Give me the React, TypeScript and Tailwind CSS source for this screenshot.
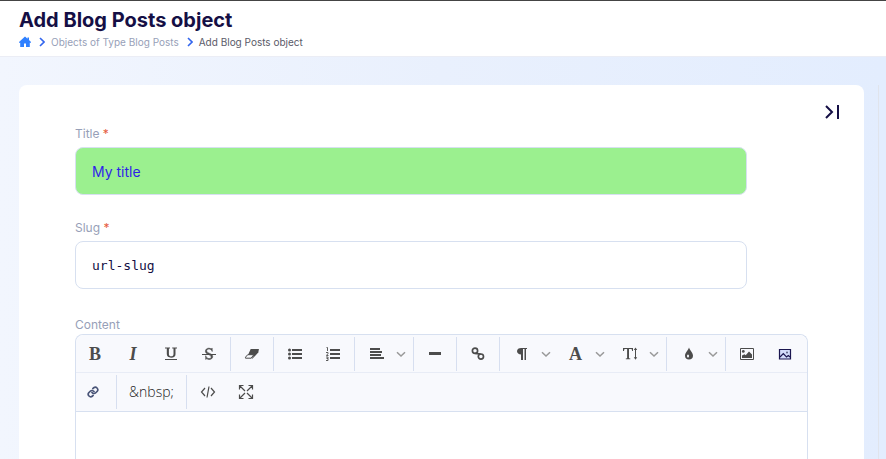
import type { ReactNode } from "react";

function Icon({ children, size = 16, className = "" }: { children: ReactNode; size?: number; className?: string }) {
  return (
    <svg width={size} height={size} viewBox="0 0 16 16" fill="currentColor" aria-hidden="true" className={className}>
      {children}
    </svg>
  );
}

function Chevron() {
  return (
    <svg width="10" height="10" viewBox="0 0 10 10" fill="none" stroke="#999999" strokeWidth="1.5" aria-hidden="true">
      <path d="M1 3.2 5 7l4-3.8" />
    </svg>
  );
}

function Tool({ label, children, wide = false }: { label: string; children: ReactNode; wide?: boolean }) {
  return (
    <button
      type="button"
      aria-label={label}
      className={`flex h-[34px] shrink-0 items-center justify-center text-[#4c4c4c] ${wide ? "w-[65px]" : "w-[38px]"}`}
    >
      {children}
    </button>
  );
}

function MenuTool({ label, children }: { label: string; children: ReactNode }) {
  return (
    <button type="button" aria-label={label} className="flex h-[34px] w-[54px] shrink-0 items-center text-[#4c4c4c]">
      <span className="flex w-[39px] justify-center">{children}</span>
      <Chevron />
    </button>
  );
}

function Group({ children, first = false, last = false }: { children: ReactNode; first?: boolean; last?: boolean }) {
  return (
    <div className={`flex pr-0.5 ${first ? "" : "pl-0.5"} ${last ? "" : "border-r border-[#d7dff0]"}`}>{children}</div>
  );
}

const letter = "font-['Liberation_Serif',serif] text-[18px] leading-none font-bold";

function Toolbar() {
  return (
    <div role="toolbar" aria-label="Content formatting" className="rounded-t-lg border-b border-[#d7e0f0] bg-[#f8f9fd]">
      <div className="flex border-b border-[#e8ecf6] pt-0.5 pb-px">
        <Group first>
          <Tool label="Bold"><span className={letter}>B</span></Tool>
          <Tool label="Italic"><span className={`${letter} italic`}>I</span></Tool>
          <Tool label="Underline">
            <Icon>
              <path d="M2 1.500h5v1H5.900V8c0 1.600.8 2.300 2.300 2.300s2.300-.8 2.300-2.300V2.500H9.200v-1H14v1h-1.500v5.700c0 2.100-1.500 3.500-4.400 3.500-2.700 0-4.300-1.300-4.300-3.600V2.500H2zM2 13h12v1H2z" />
            </Icon>
          </Tool>
          <Tool label="Strikethrough">
            <Icon>
              <path d="M1 8h14v1H1z" />
              <path d="M11.200 5.500C10.700 3.800 9.700 2.900 8 2.900c-1.400 0-2.300.7-2.300 1.800 0 3 6 2.300 6 5.800 0 1.900-1.500 3-3.700 3-1.200 0-2.200-.7-2.800-.7l-.5.6V9.700c.6 1.900 1.800 2.900 3.400 2.900 1.300 0 2.100-.6 2.100-1.600 0-2.800-5.800-2.200-5.800-5.700C4.400 3.400 5.900 2.200 7.900 2.200c1.200 0 1.900.6 2.400.6.400 0 .5-.2.6-.5h.3z" stroke="currentColor" strokeWidth=".6" />
            </Icon>
          </Tool>
        </Group>
        <Group>
          <Tool label="Remove format">
            <Icon>
              <path d="M6.700 3H15l-1 3-3.500 4H3.500z" />
              <path d="M3.700 8.700h6.100l-2.700 3.500H1.500v-1z" fill="#f8f9fd" stroke="currentColor" />
              <path d="m14.500 4-.2 2.400-5.700 6.200-1.300.100z" />
            </Icon>
          </Tool>
        </Group>
        <Group>
          <Tool label="Bulleted list">
            <Icon>
              <path d="M5 3h10v2H5zM5 7h10v2H5zM5 11h10v2H5z" />
              <circle cx="2.500" cy="4" r="1.500" /><circle cx="2.500" cy="8" r="1.500" /><circle cx="2.500" cy="12" r="1.500" />
            </Icon>
          </Tool>
          <Tool label="Numbered list">
            <Icon>
              <path d="M5 3h10v2H5zM5 7h10v2H5zM5 11h10v2H5z" />
              <path d="M1.500 1.500h1V5M1 6.500h2v1l-1.500 2H3.500M1 11h2v1.500H1.500M3 12.500v2H1" fill="none" stroke="currentColor" strokeWidth=".9" />
            </Icon>
          </Tool>
        </Group>
        <Group>
          <MenuTool label="Alignment">
            <Icon><path d="M1 2h10v2H1zM1 5h12v2H1zM1 8h11v2H1zM1 11h14v2H1z" /></Icon>
          </MenuTool>
        </Group>
        <Group>
          <Tool label="Horizontal line"><Icon><path d="M2 6h12v3H2z" /></Icon></Tool>
        </Group>
        <Group>
          <Tool label="Link">
            <Icon>
              <g fill="none" stroke="currentColor" strokeWidth="1.700">
                <circle cx="5" cy="4.700" r="2.600" /><circle cx="10.900" cy="10.600" r="2.600" /><path d="m5.300 7.300 5.300.9" />
              </g>
            </Icon>
          </Tool>
        </Group>
        <Group>
          <MenuTool label="Paragraph format">
            <Icon><path d="M13 2v1h-1v11h-1.500V3H9v11H7V8.500C4.800 8.500 3 7.300 3 5.300 3 3.200 4.700 2 7.300 2z" /></Icon>
          </MenuTool>
          <MenuTool label="Text style"><span className={letter}>A</span></MenuTool>
          <MenuTool label="Text size">
            <Icon>
              <path d="M1 2h10v3h-.8L9.600 3H7v9.300l1.300.2v.8H3.800v-.8l1.300-.2V3H2.500l-.6 2H1z" />
              <path d="M13 3h1v9h-1zM11.800 4l1.700-2.500L15.200 4zM11.800 11.300h3.400l-1.700 2.500z" />
            </Icon>
          </MenuTool>
        </Group>
        <Group>
          <MenuTool label="Colour">
            <Icon>
              <path d="M8 1.500c.8 3 4 5 4 8.200A4 4 0 0 1 8 13.500a4 4 0 0 1-4-3.800C4 6.500 7.200 4.500 8 1.500z" />
              <ellipse cx="7" cy="10" rx="1" ry="1.500" fill="#f8f9fd" />
            </Icon>
          </MenuTool>
        </Group>
        <Group last>
          <Tool label="Image">
            <Icon>
              <path d="M1.500 2.500h13v11h-13z" fill="none" stroke="currentColor" />
              <circle cx="4.300" cy="5.400" r="1.400" />
              <path d="M3 12V9.500l2.500-1.300 1.200 1L10 5.500l3 3V12z" />
            </Icon>
          </Tool>
          <Tool label="Image library">
            <Icon className="text-[#1b1650]">
              <path d="M2.500 3.500h11v9.500h-11z" fill="#d3dcfb" stroke="currentColor" strokeWidth="1.200" />
              <path d="m3 11 3.300-3.300L9.500 11l1.800-1.500L13 11" fill="none" stroke="currentColor" strokeWidth="1.200" />
              <circle cx="10" cy="6.500" r="1" fill="#5a5f80" />
            </Icon>
          </Tool>
        </Group>
      </div>
      <div className="flex pt-0.5 pb-0.5">
        <Group first>
          <Tool label="Page link">
            <svg width="12" height="12" viewBox="0 0 24 24" fill="none" stroke="#4a5578" strokeWidth="3.400" strokeLinecap="round" aria-hidden="true" className="mr-1">
              <path d="M10 13a5 5 0 0 0 7.500.5l3-3a5 5 0 0 0-7-7l-1.800 1.700" />
              <path d="M14 11a5 5 0 0 0-7.500-.5l-3 3a5 5 0 0 0 7 7l1.700-1.700" />
            </svg>
          </Tool>
        </Group>
        <Group>
          <Tool label="Insert non-breaking space" wide>
            <span className="font-['Open_Sans',sans-serif] text-sm font-light text-[#222222]">&amp;nbsp;</span>
          </Tool>
        </Group>
        <Group last>
          <Tool label="Source code">
            <Icon>
              <path d="M5 4 1.500 8 5 12M11 4l3.500 4-3.500 4M9 2.500l-2 11" fill="none" stroke="currentColor" strokeWidth="1.200" />
            </Icon>
          </Tool>
          <Tool label="Full screen">
            <Icon>
              <path d="M1.500 5.500v-4h4M10.500 1.500h4v4M14.500 10.500v4h-4M5.500 14.500h-4v-4M2 2l5 5M14 2 9 7M14 14 9 9M2 14l5-5" fill="none" stroke="currentColor" strokeWidth="1.200" />
            </Icon>
          </Tool>
        </Group>
      </div>
    </div>
  );
}

function Crumb() {
  return (
    <svg width="6" height="10" viewBox="0 0 6 10" fill="none" stroke="#3366ee" strokeWidth="1.600" aria-hidden="true">
      <path d="m1 1 4 4-4 4" />
    </svg>
  );
}

function Field({ id, label, value, className }: { id: string; label: string; value: string; className: string }) {
  return (
    <div>
      <label htmlFor={id} className="block text-xs leading-4 text-[#979fb8]">
        {label} <span className="text-[#e55b40]">*</span>
      </label>
      <input
        id={id}
        type="text"
        required
        defaultValue={value}
        className={`mt-[5px] block h-12 w-full rounded-lg border border-[#d7e0f0] px-4 outline-none ${className}`}
      />
    </div>
  );
}

export default function App() {
  return (
    <div className="flex h-screen flex-col overflow-hidden bg-linear-to-r from-[#f2f6fe] via-[#e9f0fd] to-[#e3edfe] font-['Inter',sans-serif]">
      <header className="border-t border-b border-t-[#444444] border-b-[#ebedf5] bg-white px-[19px] pt-1.5 pb-1.5">
        <h1 className="text-xl leading-[26px] font-bold text-[#150f45]">Add Blog Posts object</h1>
        <nav aria-label="Breadcrumb" className="mt-px flex items-center text-[10px] leading-4">
          <a href="#home" aria-label="Home" className="mr-2 text-[#2f80ff]">
            <svg width="12" height="12" viewBox="0 0 12 12" fill="currentColor" aria-hidden="true">
              <path d="M6 .5 8.500 2.700V1.500H10v2.600L12 6v.7h-1.200V11H7V7.500H5V11H1.200V6.700H0V6z" />
            </svg>
          </a>
          <Crumb />
          <a href="#posts" className="mr-2 ml-1.5 text-[#979fb8]">Objects of Type Blog Posts</a>
          <Crumb />
          <span aria-current="page" className="ml-1.5 text-[#5a5a68]">Add Blog Posts object</span>
        </nav>
      </header>
      <main className="flex flex-1 pt-7 pl-[19px]">
        <section className="flex flex-1 items-start justify-between rounded-t-lg bg-white pr-6 pl-14">
          <form className="flex w-[733px] flex-col self-stretch pt-[41px]">
            <div className="flex flex-col gap-[25px] pr-[61px]">
              <Field id="title" label="Title" value="My title" className="bg-[#9bf08f] text-sm text-[#2f1fe8]" />
              <Field id="slug" label="Slug" value="url-slug" className="bg-white font-['DejaVu_Sans_Mono',monospace] text-[13px] text-[#150f45]" />
            </div>
            <label htmlFor="content" className="mt-7 block text-xs leading-4 text-[#979fb8]">Content</label>
            <div className="mt-px flex flex-1 flex-col rounded-t-lg border border-b-0 border-[#d7e0f0]">
              <Toolbar />
              <textarea id="content" className="block w-full flex-1 resize-none rounded-t-md bg-white p-4 text-sm outline-none" />
            </div>
          </form>
          <button type="button" aria-label="Collapse panel" className="mt-5 text-[#150f45]">
            <svg width="16" height="14" viewBox="0 0 16 14" fill="none" stroke="currentColor" strokeWidth="2" aria-hidden="true">
              <path d="m2 1 6 6-6 6M14 0v14" />
            </svg>
          </button>
        </section>
        <div className="ml-3.5 w-2 border-l border-[#e0e4ec]" />
      </main>
    </div>
  );
}
